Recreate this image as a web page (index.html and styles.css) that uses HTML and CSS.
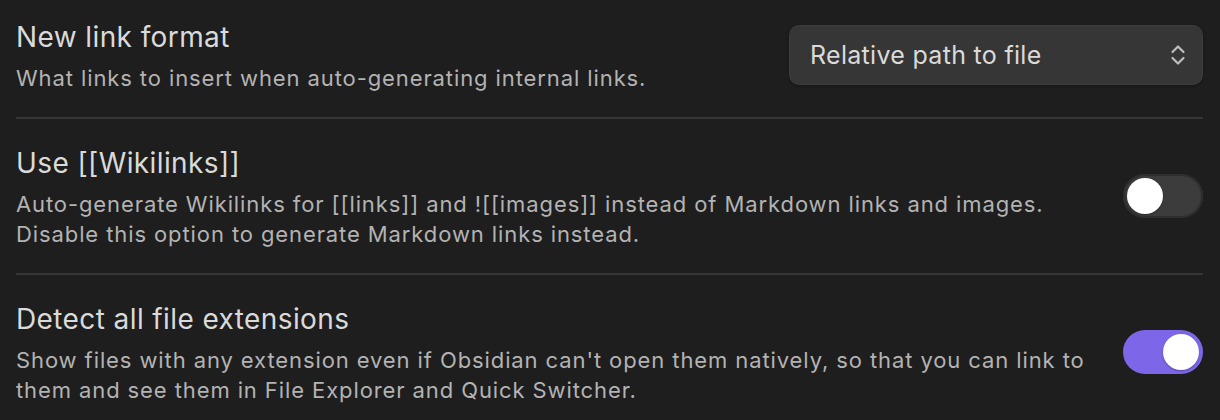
FILE: index.html
```html
<!DOCTYPE html>
<html>
<head>
<meta charset="utf-8">
<link rel="stylesheet" href="styles.css">
</head>
<body>
<div class="settings">
  <div class="setting-item">
    <div class="setting-info">
      <div class="setting-name">New link format</div>
      <div class="setting-desc">What links to insert when auto-generating internal links.</div>
    </div>
    <div class="setting-control">
      <div class="dropdown">
        <span>Relative path to file</span>
        <svg class="chev" width="16" height="22" viewBox="0 0 16 22"><path d="M2.5 8 L8 2.5 L13.5 8 M2.5 14 L8 19.5 L13.5 14" fill="none" stroke="currentColor" stroke-width="2.2" stroke-linecap="round" stroke-linejoin="round"/></svg>
      </div>
    </div>
  </div>
  <div class="setting-item">
    <div class="setting-info">
      <div class="setting-name">Use [[Wikilinks]]</div>
      <div class="setting-desc">Auto-generate Wikilinks for [[links]] and ![[images]] instead of Markdown links and images.<br>Disable this option to generate Markdown links instead.</div>
    </div>
    <div class="setting-control">
      <div class="toggle"><div class="knob"></div></div>
    </div>
  </div>
  <div class="setting-item">
    <div class="setting-info">
      <div class="setting-name">Detect all file extensions</div>
      <div class="setting-desc">Show files with any extension even if Obsidian can't open them natively, so that you can link to them and see them in File Explorer and Quick Switcher.</div>
    </div>
    <div class="setting-control">
      <div class="toggle on"><div class="knob"></div></div>
    </div>
  </div>
</div>
</body>
</html>
```
FILE: styles.css
```css
html, body {
  margin: 0;
  background: #1e1e1e;
  font-family: Inter, "Noto Sans", sans-serif;
  overflow: hidden;
}
.settings {
  padding: 17px 17px 0 16px;
}
.setting-item {
  display: flex;
  align-items: center;
  padding: 24px 0;
  border-top: 2px solid #363636;
}
.setting-item:first-child {
  padding-top: 0;
  border-top: none;
}
.setting-info {
  flex: 1;
  min-width: 0;
  padding-right: 20px;
}
.setting-name {
  color: #dadada;
  font-size: 28px;
  line-height: 40px;
  letter-spacing: 0.4px;
}
.setting-desc {
  color: #b3b3b3;
  font-size: 22px;
  line-height: 30px;
  padding-top: 6px;
  letter-spacing: 0.9px;
}
.setting-control {
  flex: none;
  display: flex;
  justify-content: flex-end;
}
.dropdown {
  width: 414px;
  height: 60px;
  box-sizing: border-box;
  background: #363636;
  border-radius: 10px;
  box-shadow: 0 1px 3px rgba(0,0,0,0.35), inset 0 0 0 1px rgba(255,255,255,0.03);
  display: flex;
  align-items: center;
  justify-content: space-between;
  padding: 0 17px 0 21px;
  color: #dadada;
  font-size: 25px;
  letter-spacing: 0.3px;
}
.chev {
  color: #bdbdbd;
}
.toggle {
  width: 80px;
  height: 44px;
  border-radius: 22px;
  background: #3c3c3c;
  box-shadow: inset 0 0 0 2px #2e2e2e;
  display: flex;
  align-items: center;
  padding: 0 4px;
  box-sizing: border-box;
}
.toggle.on {
  background: #7d66e8;
  box-shadow: none;
  justify-content: flex-end;
}
.knob {
  width: 36px;
  height: 36px;
  border-radius: 50%;
  background: #ffffff;
  box-shadow: 0 1px 2px rgba(0,0,0,0.3);
}
```
